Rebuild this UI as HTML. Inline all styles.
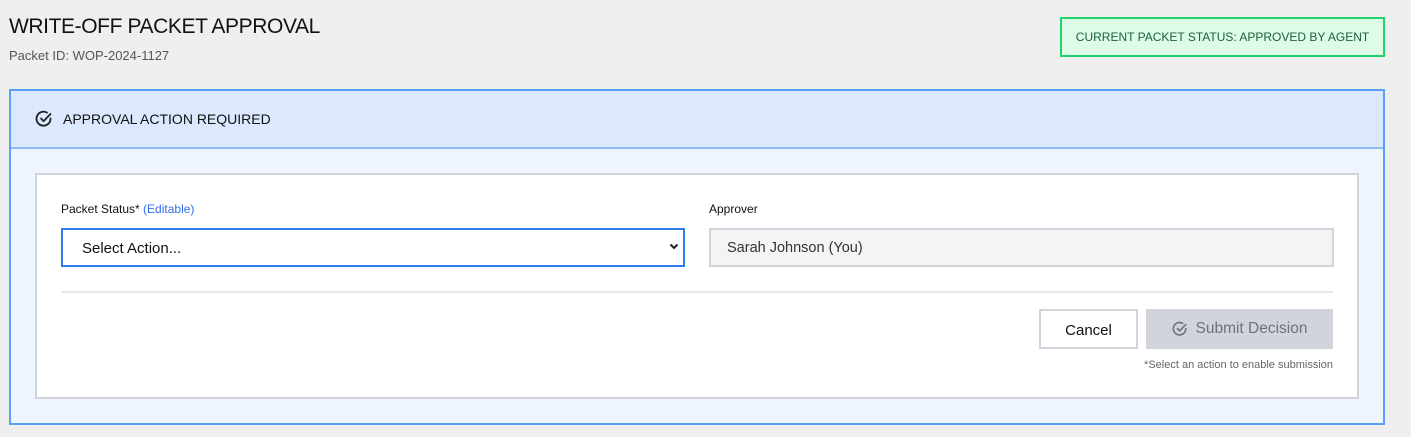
<!DOCTYPE html>
<html><head><style>
*{box-sizing:border-box;margin:0;padding:0}
body{width:1411px;height:437px;background:#efefef;font-family:"Liberation Sans",sans-serif;position:relative;overflow:hidden;color:#111}
.a{position:absolute}
</style></head><body>
<div class="a" style="left:9px;top:15px;font-size:21px;color:#111;letter-spacing:-0.4px">WRITE-OFF PACKET APPROVAL</div>
<div class="a" style="left:9px;top:48px;font-size:13px;color:#555">Packet ID: WOP-2024-1127</div>
<div class="a" style="left:1060px;top:17px;width:325px;height:40px;border:2px solid #22d36e;background:#dcfce7;color:#1f5f3a;font-size:12px;display:flex;align-items:center;justify-content:center">CURRENT PACKET STATUS: APPROVED BY AGENT</div>
<div class="a" style="left:9px;top:89px;width:1376px;height:336px;border:2px solid #5aa0f8;background:#eef5fe"></div>
<div class="a" style="left:11px;top:91px;width:1372px;height:58px;background:#dbe8fd;border-bottom:2px solid #8fbaf5"></div>
<svg class="a" style="left:35px;top:110px" width="18" height="18" viewBox="0 0 18 18"><path d="M15.5 8.5A7 7 0 1 1 12 2.6" fill="none" stroke="#222" stroke-width="1.8" stroke-linecap="round"/><path d="M6 8.5l2.6 2.6L15.5 4" fill="none" stroke="#222" stroke-width="1.8" stroke-linecap="round" stroke-linejoin="round"/></svg>
<div class="a" style="left:63px;top:111px;font-size:14px">APPROVAL ACTION REQUIRED</div>
<div class="a" style="left:35px;top:173px;width:1324px;height:226px;border:2px solid #d1d5db;background:#fff"></div>
<div class="a" style="left:61px;top:202px;font-size:12px">Packet Status* <span style="color:#2f6ff0">(Editable)</span></div>
<div class="a" style="left:61px;top:228px;width:624px;height:39px;border:2px solid #2f7cf0;background:#fff"></div>
<div class="a" style="left:82px;top:240px;font-size:15px">Select Action...</div>
<svg class="a" style="left:669px;top:243px" width="10" height="7" viewBox="0 0 10 7"><path d="M1.5 1.5L5 5l3.5-3.5" fill="none" stroke="#222" stroke-width="2"/></svg>
<div class="a" style="left:709px;top:202px;font-size:12px">Approver</div>
<div class="a" style="left:709px;top:228px;width:625px;height:39px;border:2px solid #d1d5db;background:#f3f4f6"></div>
<div class="a" style="left:727px;top:240px;font-size:14.5px;color:#333">Sarah Johnson (You)</div>
<div class="a" style="left:61px;top:291px;width:1272px;height:2px;background:#e5e7eb"></div>
<div class="a" style="left:1039px;top:309px;width:99px;height:40px;border:2px solid #d1d5db;background:#fff;font-size:15px;padding-top:2px;display:flex;align-items:center;justify-content:center">Cancel</div>
<div class="a" style="left:1146px;top:309px;width:187px;height:40px;background:#d1d5db;color:#6b7280;font-size:15.5px;display:flex;align-items:center;justify-content:center;gap:8px"><svg width="16" height="16" viewBox="0 0 18 18"><path d="M15.5 8.5A7 7 0 1 1 12 2.6" fill="none" stroke="#6b7280" stroke-width="1.8" stroke-linecap="round"/><path d="M6 8.5l2.6 2.6L15.5 4" fill="none" stroke="#6b7280" stroke-width="1.8" stroke-linecap="round" stroke-linejoin="round"/></svg>Submit Decision</div>
<div class="a" style="right:78px;top:359px;font-size:11px;color:#666">*Select an action to enable submission</div>
</body></html>
